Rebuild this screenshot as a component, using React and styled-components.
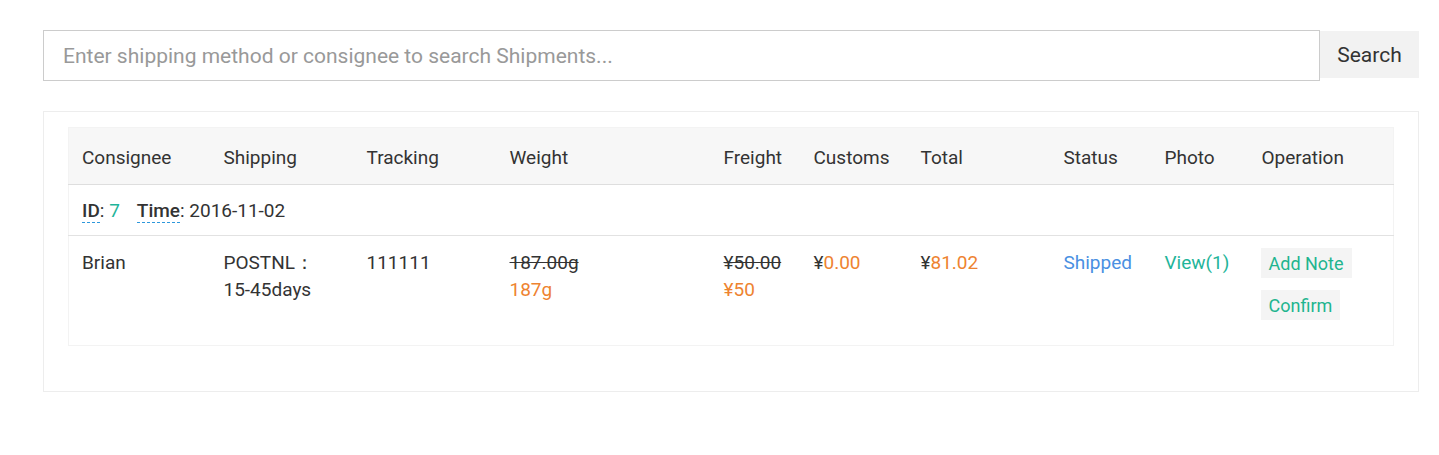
import React from "react";
import styled, { createGlobalStyle } from "styled-components";

const Global = createGlobalStyle`
  html, body { margin: 0; padding: 0; background: #fff; }
  body { font-family: Roboto, "Noto Sans", Arial, sans-serif; color: #333; }
  * { box-sizing: border-box; }
`;

const Page = styled.div`
  padding: 30px 20px 0 43px;
`;

const SearchBar = styled.form`
  display: flex;
  align-items: flex-start;
`;

const SearchInput = styled.input`
  flex: 1;
  height: 51px;
  border: 1px solid #ccc;
  padding: 0 19px;
  font-family: Roboto, sans-serif;
  font-size: 21px;
  color: #333;
  outline: none;
  &::placeholder { color: #999; }
`;

const SearchButton = styled.button`
  width: 99px;
  height: 47px;
  margin-top: 1px;
  border: none;
  background: #f2f2f2;
  font-family: Roboto, sans-serif;
  font-size: 21px;
  color: #333;
  padding: 0;
`;

const Panel = styled.div`
  margin-top: 30px;
  border: 1px solid #ededed;
  padding: 15px 25px 45px 24px;
`;

const Table = styled.table`
  width: 100%;
  border-collapse: collapse;
  border: 1px solid #f3f3f3;
  font-size: 19px;
  line-height: 27px;
  table-layout: fixed;
`;

const HeadRow = styled.tr`
  background: #f7f7f7;
  border-bottom: 1px solid #dedede;
`;

const Th = styled.th`
  height: 57px;
  padding: 3px 13px 0;
  text-align: left;
  font-weight: 400;
  color: #333;
  width: ${(p) => p.$w}px;
`;

const InfoRow = styled.tr`
  border-bottom: 1px solid #e2e2e2;
`;

const InfoCell = styled.td`
  height: 51px;
  padding: 0 13px;
`;

const Label = styled.span`
  font-weight: 500;
  display: inline-block;
  line-height: 22px;
  border-bottom: 1px dashed #2e98dc;
`;

const InfoValue = styled.span`
  color: ${(p) => p.$color || "#333"};
  margin-right: ${(p) => (p.$gap ? "17px" : "0")};
`;

const DataRow = styled.tr`
  border-bottom: 1px solid #f3f3f3;
`;

const Td = styled.td`
  vertical-align: top;
  padding: 13px 13px 12px;
  height: 110px;
`;

const Line = styled.div`
  color: ${(p) => p.$color || "#333"};
  text-decoration: ${(p) => (p.$strike ? "line-through" : "none")};
`;

const Accent = styled.span`
  color: ${(p) => p.$color};
`;

const OpButton = styled.button`
  display: block;
  height: 30px;
  margin: -1px 0 13px -1px;
  padding: 0 8px;
  border: none;
  background: #f4f4f4;
  color: #1fb58f;
  font-family: Roboto, sans-serif;
  font-size: 18px;
`;

const ORANGE = "#ee8330";
const GREEN = "#1fb59a";
const BLUE = "#4a90e2";

const cols = [
  ["Consignee", 142],
  ["Shipping", 143],
  ["Tracking", 143],
  ["Weight", 214],
  ["Freight", 90],
  ["Customs", 107],
  ["Total", 143],
  ["Status", 101],
  ["Photo", 97],
  ["Operation", 145],
];

export default function App() {
  return (
    <Page>
      <Global />
      <SearchBar onSubmit={(e) => e.preventDefault()}>
        <SearchInput placeholder="Enter shipping method or consignee to search Shipments..." />
        <SearchButton type="submit">Search</SearchButton>
      </SearchBar>
      <Panel>
        <Table>
          <thead>
            <HeadRow>
              {cols.map(([c, w]) => (
                <Th key={c} $w={w}>{c}</Th>
              ))}
            </HeadRow>
          </thead>
          <tbody>
            <InfoRow>
              <InfoCell colSpan={10}>
                <Label title="Shipment ID">ID</Label>: <InfoValue $color={GREEN} $gap>7</InfoValue>
                <Label title="Created time">Time</Label>: <InfoValue>2016-11-02</InfoValue>
              </InfoCell>
            </InfoRow>
            <DataRow>
              <Td>Brian</Td>
              <Td>
                <Line>POSTNL：</Line>
                <Line>15-45days</Line>
              </Td>
              <Td>111111</Td>
              <Td>
                <Line $strike>187.00g</Line>
                <Line $color={ORANGE}>187g</Line>
              </Td>
              <Td>
                <Line $strike>¥50.00</Line>
                <Line $color={ORANGE}>¥50</Line>
              </Td>
              <Td>
                ¥<Accent $color={ORANGE}>0.00</Accent>
              </Td>
              <Td>
                ¥<Accent $color={ORANGE}>81.02</Accent>
              </Td>
              <Td>
                <Accent $color={BLUE}>Shipped</Accent>
              </Td>
              <Td>
                <Accent $color={GREEN}>View(1)</Accent>
              </Td>
              <Td>
                <OpButton>Add Note</OpButton>
                <OpButton>Confirm</OpButton>
              </Td>
            </DataRow>
          </tbody>
        </Table>
      </Panel>
    </Page>
  );
}
